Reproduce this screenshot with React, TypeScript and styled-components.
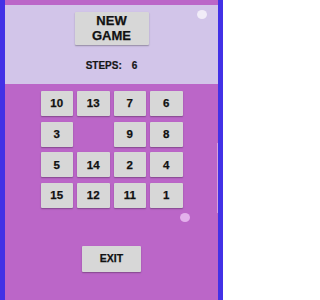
import styled, { createGlobalStyle } from 'styled-components';

/** global */
const GlobalStyle = createGlobalStyle`
	html, body {
		margin: 0;
		padding: 0;
	}
	body {
		font-family: 'Liberation Sans', Arial, sans-serif;
	}
`;

/** style */
const Screen = styled.div`
	position: relative;
	width: 223px;
	height: 300px;
	background: #4231e6;
	padding: 0 5px;
	box-sizing: border-box;
	display: flex;
	overflow: hidden;
`;

const Phone = styled.div`
	flex: 1;
	background: #bb66c8;
	display: flex;
	flex-direction: column;
	align-items: center;
`;

const Header = styled.div`
	align-self: stretch;
	margin-top: 5px;
	height: 79px;
	background: #d2c5e9;
	display: flex;
	flex-direction: column;
	align-items: center;
`;

const GrayButton = styled.button<{ $w: number; $h: number; $size: number }>`
	width: ${p => p.$w}px;
	height: ${p => p.$h}px;
	border: none;
	border-radius: 1px;
	background: #d7d7d7;
	box-shadow: 0 1px 1.5px rgba(0, 0, 0, 0.3);
	font-family: 'Liberation Sans', Arial, sans-serif;
	font-weight: 700;
	font-size: ${p => p.$size}px;
	line-height: 1.1;
	color: #111;
	-webkit-text-stroke: 0.25px #111;
	padding: 0;
	display: flex;
	align-items: center;
	justify-content: center;
	text-align: center;
`;

const NewGame = styled(GrayButton)`
	margin-top: 7px;
`;

const Steps = styled.div`
	margin-top: 15px;
	font-size: 10px;
	font-weight: 700;
	color: #161616;
	-webkit-text-stroke: 0.2px #161616;
	display: flex;
	gap: 10px;
`;

const Board = styled.div`
	margin-top: 7px;
	display: grid;
	grid-template-columns: repeat(4, 32.5px);
	grid-auto-rows: 25px;
	column-gap: 4px;
	row-gap: 5.7px;
`;

const Tile = styled(GrayButton)`
	width: 100%;
	height: 100%;
`;

const Empty = styled.div``;

const Exit = styled(GrayButton)`
	margin-top: 38px;
`;

const Dot = styled.div<{ $x: number; $y: number; $color: string }>`
	position: absolute;
	left: ${p => p.$x - 5}px;
	top: ${p => p.$y - 4.5}px;
	width: 10px;
	height: 9px;
	border-radius: 50%;
	background: ${p => p.$color};
	opacity: 0.9;
`;

const ScrollThumb = styled.div`
	position: absolute;
	left: 216.5px;
	top: 143px;
	width: 1.5px;
	height: 70px;
	background: rgba(230, 200, 240, 0.6);
`;

const tiles = [10, 13, 7, 6, 3, 0, 9, 8, 5, 14, 2, 4, 15, 12, 11, 1];

/** Component */
const App = () => {
	return (
		<>
			<GlobalStyle />
			<Screen>
				<Phone>
					<Header>
						<NewGame $w={74} $h={33} $size={13}>
							NEW
							<br />
							GAME
						</NewGame>
						<Steps>
							<span>STEPS:</span>
							<span>6</span>
						</Steps>
					</Header>
					<Board>
						{tiles.map((n, i) =>
							n ? (
								<Tile key={i} $w={32} $h={25} $size={11.5}>
									{n}
								</Tile>
							) : (
								<Empty key={i} />
							),
						)}
					</Board>
					<Exit $w={59} $h={26} $size={10.5}>
						EXIT
					</Exit>
				</Phone>
				<Dot $x={202} $y={14} $color='#f4f0fa' />
				<Dot $x={185} $y={217} $color='#e8b8ef' />
				<ScrollThumb />
			</Screen>
		</>
	);
};

export default App;
